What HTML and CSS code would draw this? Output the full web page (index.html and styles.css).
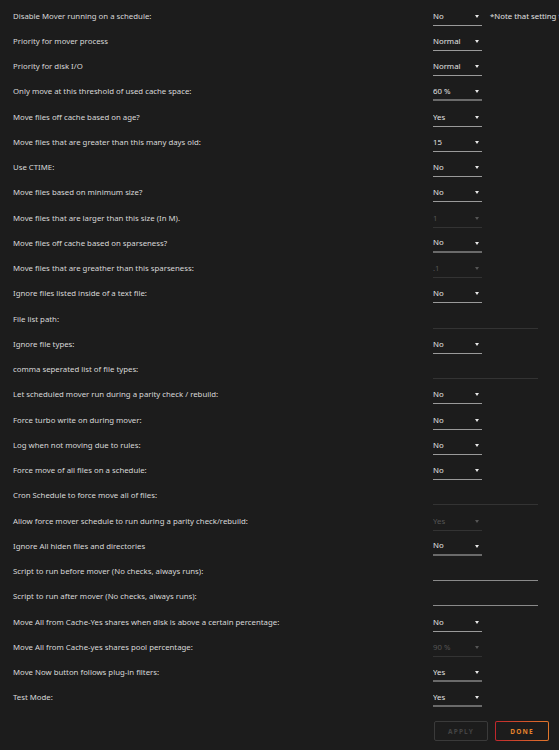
FILE: index.html
```html
<!DOCTYPE html>
<html lang="en">
<head>
    <meta charset="UTF-8">
    <title>Mover Tuning</title>
    <link rel="stylesheet" href="styles.css">
</head>
<body>
    <div class="settings">
        <div class="label">Disable Mover running on a schedule:</div>
        <div class="field"><div class="select">No</div><span class="note">*Note that setting this to Yes will disable the mover schedule</span></div>

        <div class="label">Priority for mover process</div>
        <div class="field"><div class="select">Normal</div></div>

        <div class="label">Priority for disk I/O</div>
        <div class="field"><div class="select">Normal</div></div>

        <div class="label">Only move at this threshold of used cache space:</div>
        <div class="field"><div class="select thick">60 %</div></div>

        <div class="label">Move files off cache based on age?</div>
        <div class="field"><div class="select">Yes</div></div>

        <div class="label">Move files that are greater than this many days old:</div>
        <div class="field"><div class="select">15</div></div>

        <div class="label">Use CTIME:</div>
        <div class="field"><div class="select">No</div></div>

        <div class="label">Move files based on minimum size?</div>
        <div class="field"><div class="select">No</div></div>

        <div class="label">Move files that are larger than this size (In M).</div>
        <div class="field"><div class="select disabled">1</div></div>

        <div class="label">Move files off cache based on sparseness?</div>
        <div class="field"><div class="select thick">No</div></div>

        <div class="label">Move files that are greather than this sparseness:</div>
        <div class="field"><div class="select disabled">.1</div></div>

        <div class="label">Ignore files listed inside of a text file:</div>
        <div class="field"><div class="select">No</div></div>

        <div class="label">File list path:</div>
        <div class="field"><div class="text-input disabled"></div></div>

        <div class="label">Ignore file types:</div>
        <div class="field"><div class="select">No</div></div>

        <div class="label">comma seperated list of file types:</div>
        <div class="field"><div class="text-input disabled"></div></div>

        <div class="label">Let scheduled mover run during a parity check / rebuild:</div>
        <div class="field"><div class="select">No</div></div>

        <div class="label">Force turbo write on during mover:</div>
        <div class="field"><div class="select">No</div></div>

        <div class="label">Log when not moving due to rules:</div>
        <div class="field"><div class="select">No</div></div>

        <div class="label">Force move of all files on a schedule:</div>
        <div class="field"><div class="select">No</div></div>

        <div class="label">Cron Schedule to force move all of files:</div>
        <div class="field"><div class="text-input disabled"></div></div>

        <div class="label">Allow force mover schedule to run during a parity check/rebuild:</div>
        <div class="field"><div class="select disabled">Yes</div></div>

        <div class="label">Ignore All hiden files and directories</div>
        <div class="field"><div class="select thick">No</div></div>

        <div class="label">Script to run before mover (No checks, always runs):</div>
        <div class="field"><div class="text-input"></div></div>

        <div class="label">Script to run after mover (No checks, always runs):</div>
        <div class="field"><div class="text-input"></div></div>

        <div class="label">Move All from Cache-Yes shares when disk is above a certain percentage:</div>
        <div class="field"><div class="select">No</div></div>

        <div class="label">Move All from Cache-yes shares pool percentage:</div>
        <div class="field"><div class="select disabled">90 %</div></div>

        <div class="label">Move Now button follows plug-in filters:</div>
        <div class="field"><div class="select thick">Yes</div></div>

        <div class="label">Test Mode:</div>
        <div class="field"><div class="select thick">Yes</div></div>
    </div>

    <div class="actions">
        <button class="btn btn-apply" disabled>Apply</button>
        <button class="btn btn-done">Done</button>
    </div>
</body>
</html>
```

FILE: styles.css
```css
html, body {
    margin: 0;
    padding: 0;
    background-color: #1c1c1c;
    overflow: hidden;
}
body {
    width: 559px;
    height: 750px;
    font-family: "Noto Sans", "Open Sans", sans-serif;
    font-size: 7.8px;
    color: #d8d8d8;
}
.settings {
    display: grid;
    grid-template-columns: 420px 1fr;
    grid-auto-rows: 25.25px;
    padding: 3px 0 0 13px;
}
.label {
    display: flex;
    align-items: center;
    white-space: nowrap;
}
.field {
    display: flex;
    align-items: center;
    gap: 8px;
    white-space: nowrap;
    min-width: 0;
    overflow: hidden;
}
.select {
    position: relative;
    flex: none;
    box-sizing: border-box;
    width: 49px;
    height: 19px;
    display: flex;
    align-items: center;
    border-bottom: 1px solid #9a9a9a;
    color: #e2e2e2;
    margin-top: 1px;
}
.select::after {
    content: "";
    position: absolute;
    right: 3px;
    top: 8px;
    border-left: 2px solid transparent;
    border-right: 2px solid transparent;
    border-top: 3px solid #e8e8e8;
}
.select.thick {
    border-bottom: 2px solid #6a6a6a;
}
.select.disabled {
    color: #555;
    border-bottom: 1px solid #333;
}
.select.disabled::after {
    border-top-color: #555;
}
.text-input {
    box-sizing: border-box;
    width: 105px;
    height: 19px;
    border-bottom: 1px solid #8a8a8a;
    margin-top: 1px;
}
.text-input.disabled {
    border-bottom-color: #333;
}
.note {
    color: #e0e0e0;
}
.actions {
    display: flex;
    gap: 7px;
    padding: 11px 0 0 434px;
}
.btn {
    box-sizing: border-box;
    width: 54px;
    height: 20px;
    background: transparent;
    border-radius: 2px;
    font-family: "Noto Sans", "Open Sans", sans-serif;
    font-size: 6.5px;
    font-weight: bold;
    letter-spacing: 1.2px;
    text-transform: uppercase;
    padding: 0;
}
.btn-apply {
    border: 1px solid #3a3a3a;
    color: #444;
}
.btn-done {
    border: 1px solid transparent;
    background: linear-gradient(#1c1c1c, #1c1c1c) padding-box,
                linear-gradient(90deg, #c0272d, #e2772b) border-box;
    color: #e5832c;
}
```
